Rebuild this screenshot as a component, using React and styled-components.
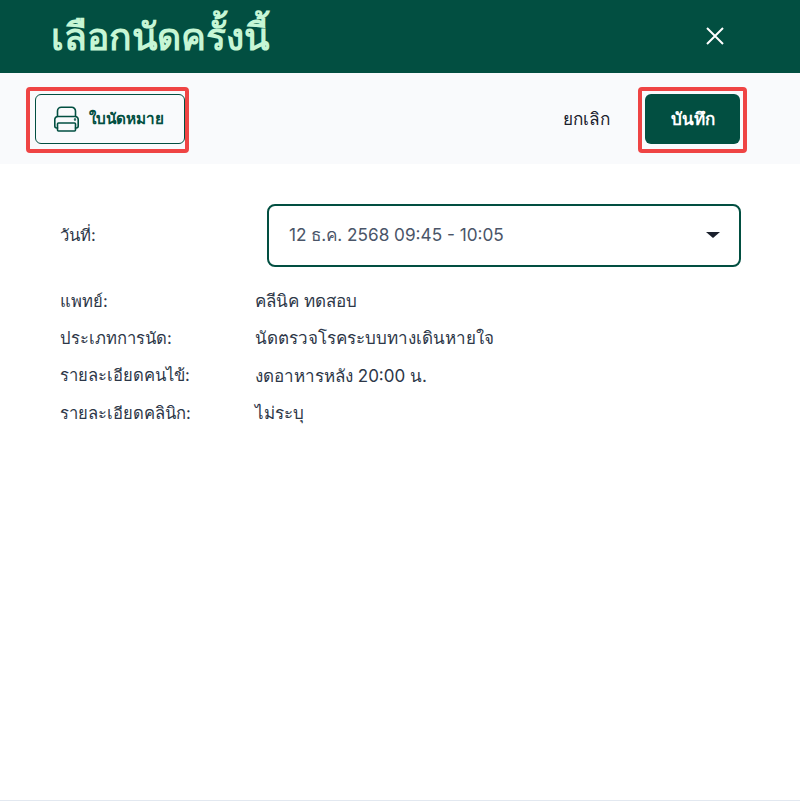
import React from "react";
import styled, { createGlobalStyle } from "styled-components";

const Global = createGlobalStyle`
  html, body { margin: 0; padding: 0; background: #fff; }
  body { font-family: Inter, "Noto Sans", "DejaVu Sans", sans-serif; }
  * { box-sizing: border-box; }
`;

const Page = styled.div`
  width: 800px;
  height: 801px;
  display: flex;
  flex-direction: column;
  border-bottom: 1px solid #e2e8f0;
  background: #fff;
`;

const Header = styled.header`
  height: 73px;
  background: #024f41;
  display: flex;
  align-items: center;
  justify-content: space-between;
  padding: 0 76px 0 51px;
`;

const Title = styled.h1`
  margin: 0;
  font-size: 37.3px;
  font-weight: 600;
  line-height: 73px;
  color: #c6f6d5;
`;

const CloseButton = styled.button`
  border: 0;
  padding: 0;
  background: none;
  display: flex;
  margin-top: -1px;
`;

const Toolbar = styled.div`
  height: 91px;
  background: #f9fafc;
  display: flex;
  align-items: center;
  justify-content: space-between;
  padding: 0 60px 0 35px;
`;

const Highlighted = styled.div`
  position: relative;
  display: flex;
  &::after {
    content: "";
    position: absolute;
    top: -7px;
    bottom: -9px;
    left: ${(p) => p.$left}px;
    right: ${(p) => p.$right}px;
    border: 4px solid #ef4444;
    border-radius: 4px;
    pointer-events: none;
  }
`;

const PrintButton = styled.button`
  width: 150px;
  height: 50px;
  border: 1px solid #024f41;
  border-radius: 6px;
  background: transparent;
  display: flex;
  align-items: center;
  gap: 10px;
  padding: 0 0 0 18px;
  font: 700 15.3px Inter, "Noto Sans", sans-serif;
  color: #024f41;
`;

const Actions = styled.div`
  display: flex;
  align-items: center;
  gap: 35px;
`;

const CancelButton = styled.button`
  border: 0;
  padding: 0;
  background: none;
  font: 500 17.2px Inter, "Noto Sans", sans-serif;
  color: #1a202c;
`;

const SaveButton = styled.button`
  width: 95px;
  height: 50px;
  border: 0;
  border-radius: 6px;
  background: #024f41;
  color: #fff;
  font: 600 17px Inter, "Noto Sans", sans-serif;
`;

const Body = styled.main`
  padding: 40px 60px 0;
  display: grid;
  grid-template-columns: 195px 1fr;
  align-items: start;
  font-size: 17px;
  color: #2d3748;
`;

const Label = styled.div`
  height: ${(p) => p.$h || 37.3}px;
  display: flex;
  align-items: center;
  font-size: 16.6px;
`;

const Value = styled.div`
  height: 37.3px;
  display: flex;
  align-items: center;
`;

const SelectBox = styled.div`
  width: 474px;
  height: 63px;
  margin: 0 0 15px 12px;
  border: 2px solid #024f41;
  border-radius: 8px;
  display: flex;
  align-items: center;
  justify-content: space-between;
  padding: 0 19px 1px 20px;
  color: #4a5568;
  font-size: 17.2px;
`;

const Arrow = styled.span`
  width: 0;
  height: 0;
  border-left: 7px solid transparent;
  border-right: 7px solid transparent;
  border-top: 6px solid #1a202c;
`;

const rows = [
  ["แพทย์:", "คลีนิค ทดสอบ"],
  ["ประเภทการนัด:", "นัดตรวจโรคระบบทางเดินหายใจ"],
  ["รายละเอียดคนไข้:", "งดอาหารหลัง 20:00 น."],
  ["รายละเอียดคลินิก:", "ไม่ระบุ"],
];

const PrinterIcon = () => (
  <svg width="25" height="26" viewBox="0 0 25 26" fill="none" stroke="#024f41" strokeWidth="1.6" strokeLinejoin="round" strokeLinecap="round">
    <path d="M3.500 10.500V5A3.800 3.800 0 0 1 7.300 1.200h10.400A3.800 3.800 0 0 1 21.500 5v5.500" />
    <path d="M3.500 22H2.800A2 2 0 0 1 .8 20v-6.500a3 3 0 0 1 3-3h17.400a3 3 0 0 1 3 3V20a2 2 0 0 1-2 2h-.700" />
    <rect x="3.500" y="17" width="18" height="8" rx="1" />
    <circle cx="21" cy="13.500" r="0.400" fill="#024f41" />
  </svg>
);

const CloseIcon = () => (
  <svg width="18" height="18" viewBox="0 0 18 18" fill="none" stroke="#fff" strokeWidth="2">
    <path d="M1 1l16 16M17 1L1 17" />
  </svg>
);

export default function App() {
  return (
    <Page>
      <Global />
      <Header>
        <Title>เลือกนัดครั้งนี้</Title>
        <CloseButton aria-label="ปิด"><CloseIcon /></CloseButton>
      </Header>
      <Toolbar>
        <Highlighted $left={-9} $right={-4}>
          <PrintButton><PrinterIcon />ใบนัดหมาย</PrintButton>
        </Highlighted>
        <Actions>
          <CancelButton>ยกเลิก</CancelButton>
          <Highlighted $left={-7} $right={-7}>
            <SaveButton>บันทึก</SaveButton>
          </Highlighted>
        </Actions>
      </Toolbar>
      <Body>
        <Label $h={62}>วันที่:</Label>
        <SelectBox>
          <span>12 ธ.ค. 2568 09:45 - 10:05</span>
          <Arrow />
        </SelectBox>
        {rows.map(([k, v]) => (
          <React.Fragment key={k}>
            <Label>{k}</Label>
            <Value>{v}</Value>
          </React.Fragment>
        ))}
      </Body>
    </Page>
  );
}
